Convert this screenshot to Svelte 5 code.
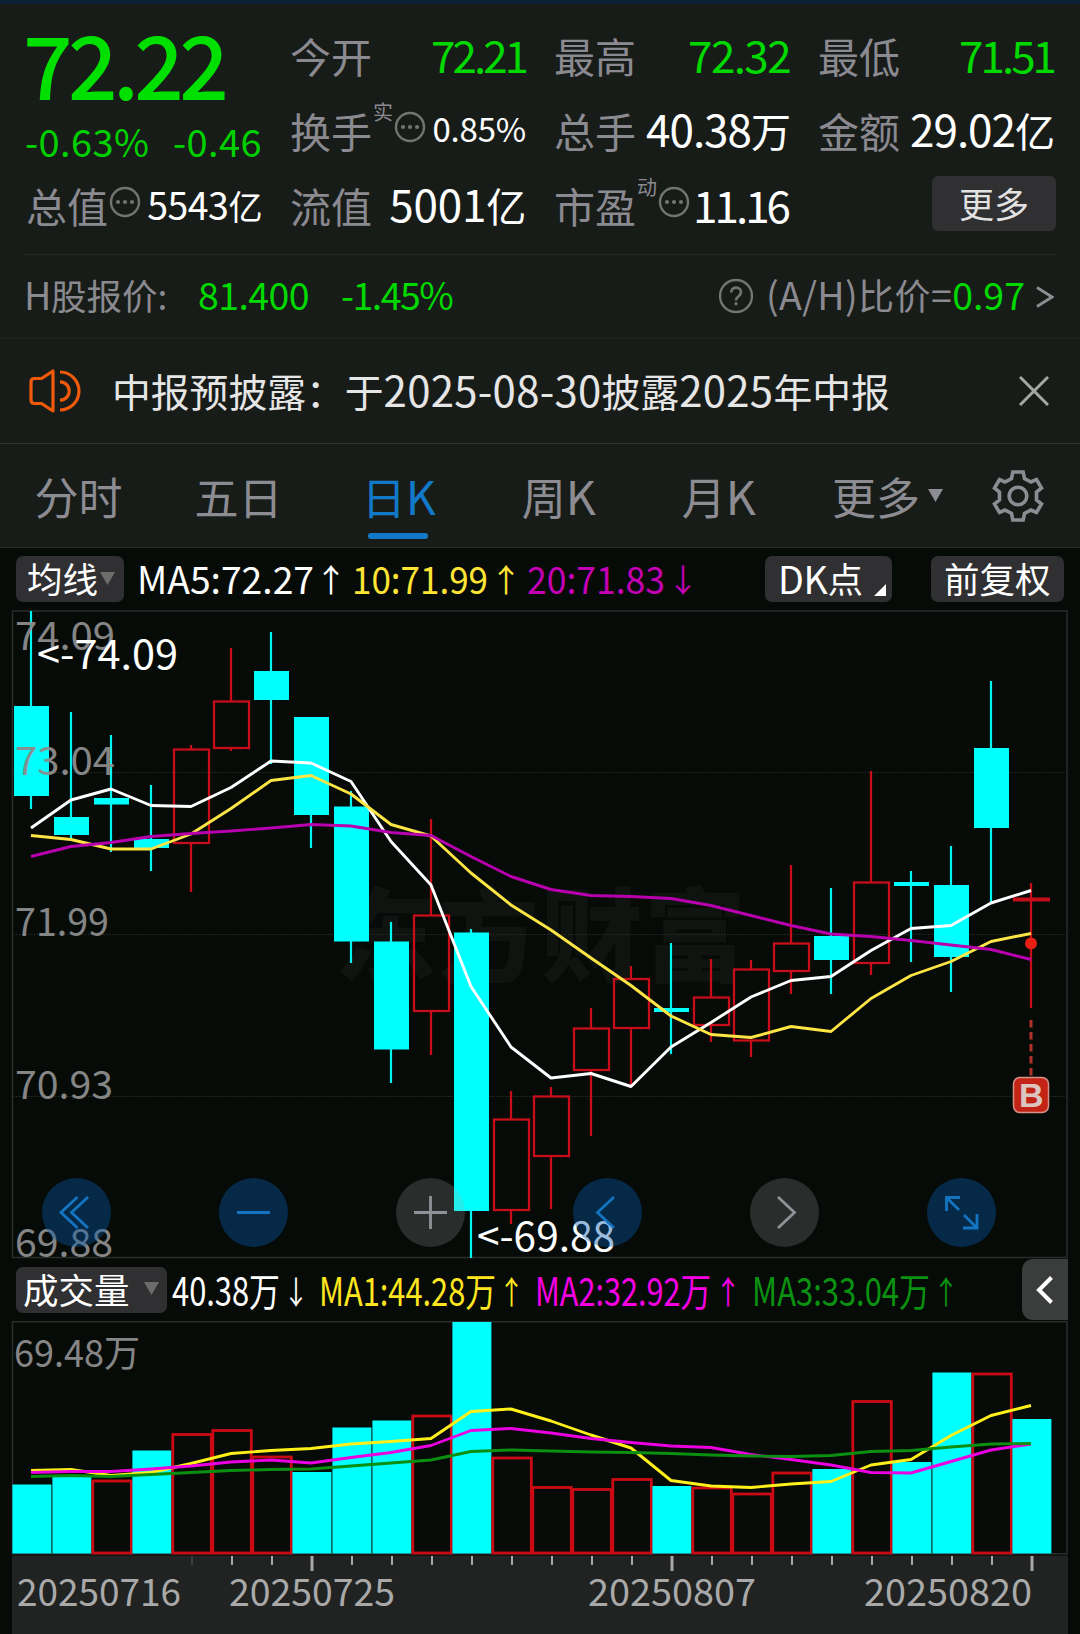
<script lang="ts">
	type Candle = { up: boolean; high: number; top: number; bottom: number; low: number };

	const STEP = 40;
	const cx = (i: number) => 31 + STEP * i;

	// u/d, high, top, bottom, low
	const candles: Candle[] = [
		['d', 611, 706, 796, 809],
		['d', 712, 817, 835, 838],
		['d', 735, 798, 804.5, 852],
		['d', 785, 839, 848, 871],
		['u', 745, 749, 843, 892],
		['u', 648, 701, 748, 751],
		['d', 632, 671, 700, 764],
		['d', 717, 717, 815, 848],
		['d', 791, 806.5, 941.5, 963],
		['d', 922, 941.5, 1049.5, 1083],
		['u', 819, 915, 1011, 1055],
		['d', 929, 932.5, 1211, 1258],
		['u', 1091, 1119, 1210, 1224],
		['u', 1087, 1096, 1156, 1209],
		['u', 1008, 1028, 1070, 1136],
		['u', 966, 978.5, 1028, 1086],
		['d', 943, 1008, 1012, 1054],
		['u', 959, 997, 1025, 1042],
		['u', 960, 969, 1040.5, 1057],
		['u', 865, 943, 971, 994],
		['d', 888, 936, 960, 994],
		['u', 771, 882, 963, 975],
		['d', 871, 882, 886, 962],
		['d', 846, 885, 957, 992],
		['d', 681, 748, 828, 903],
		['u', 883, 899.5, 899.5, 1008]
	].map(([k, high, top, bottom, low]) => ({ up: k === 'u', high, top, bottom, low }) as Candle);

	const ma5 = [828, 800, 789, 805.5, 806.5, 787.5, 761, 763, 781.5, 841.5, 885, 986.5, 1047, 1078, 1073.5, 1086.5, 1047, 1022.5, 997, 980.5, 976.5, 950.5, 928.5, 925.5, 903, 890.5];
	const ma10 = [835.5, 839.5, 849, 849, 834, 808.5, 780.5, 775.5, 794, 824.5, 836, 873, 905, 930, 958, 985.5, 1016, 1034.5, 1037.5, 1026.5, 1031.5, 998.5, 975.5, 961.5, 941.5, 933.5];
	const ma20 = [856.5, 846.5, 842.5, 836.5, 833.5, 831, 828, 824.5, 826, 832.5, 835.5, 856.5, 876.5, 889.5, 895.5, 896.5, 898.5, 905.5, 915.5, 925.5, 934, 936.5, 940.5, 945, 949.5, 959.5];

	const volumes = [1484.5, 1477, 1480, 1450.5, 1433.5, 1429.5, 1456, 1472, 1427.5, 1420.5, 1415, 1322, 1457, 1486.5, 1488.5, 1478.5, 1486, 1487, 1493, 1472, 1469, 1400.5, 1462, 1372.5, 1373, 1419];
	// volume bars drawn hollow (close above the previous close)
	const hollow = [2, 4, 5, 6, 10, 12, 13, 14, 15, 17, 18, 19, 21, 24];
	const vol1 = [1470.5, 1469.5, 1475.5, 1472.5, 1463.5, 1453.5, 1450.5, 1448.5, 1444, 1441.5, 1438.5, 1411.5, 1409, 1421, 1435, 1448, 1480.5, 1486, 1487.5, 1484, 1481.5, 1465, 1459.5, 1435.5, 1415.5, 1405.5];
	const vol2 = [1472.5, 1471.5, 1471.5, 1469, 1466, 1462, 1460, 1463, 1457.5, 1452.5, 1445.5, 1430.5, 1428.5, 1433, 1438.5, 1442.5, 1446, 1447.5, 1454.5, 1459.5, 1465, 1472.5, 1473, 1461.5, 1450, 1444];
	const vol3 = [1476.5, 1475.5, 1476.5, 1474.5, 1472.5, 1470.5, 1469.5, 1469, 1466, 1463, 1460, 1451.5, 1450, 1451, 1452, 1452.5, 1453.5, 1455, 1456, 1456.5, 1455.5, 1451.5, 1450.5, 1447, 1444, 1443.5];

	const line = (ys: number[]) => ys.map((y, i) => `${cx(i)},${y}`).join(' ');

	const gridLines = [772.5, 934.5, 1096.5];
	const priceLabels = [
		{ text: '74.09', y: 649.5, w: 100 },
		{ text: '73.04', y: 774.5, w: 100 },
		{ text: '71.99', y: 936, w: 94 },
		{ text: '70.93', y: 1098.5, w: 98 },
		{ text: '69.88', y: 1256.5, w: 98 }
	];
	const dates = [
		{ text: '20250716', x: 17, w: 164 },
		{ text: '20250725', x: 229, w: 166 },
		{ text: '20250807', x: 588, w: 168 },
		{ text: '20250820', x: 864, w: 168 }
	];

	const priceLegend = [
		{ text: 'MA5:72.27', x: 137, w: 177, arrow: '↑', ax: 331, color: '#fff' },
		{ text: '10:71.99', x: 352, w: 136, arrow: '↑', ax: 506, color: '#ffe436' },
		{ text: '20:71.83', x: 527, w: 138, arrow: '↓', ax: 683, color: '#c400b4' }
	];
	const volumeLegend = [
		{ text: '40.38万', x: 172, w: 108, arrow: '↓', ax: 296, color: '#fff' },
		{ text: 'MA1:44.28万', x: 319, w: 177, arrow: '↑', ax: 511.5, color: '#ffe61e' },
		{ text: 'MA2:32.92万', x: 535, w: 176, arrow: '↑', ax: 728, color: '#f800e4' },
		{ text: 'MA3:33.04万', x: 752, w: 178, arrow: '↑', ax: 946, color: '#0a9210' }
	];

	const tabs = ['分时', '五日', '日K', '周K', '月K'];
	let active = $state('日K');
	let showNotice = $state(true);

	const controls = [
		{ on: true, d: 'M35.5 19 19 34.5l16.5 15.5M46 19 29.5 34.5 46 50' },
		{ on: true, d: 'M18 34.5h33' },
		{ on: false, d: 'M18 34.5h33M34.5 18v33' },
		{ on: true, d: 'M41 19 24.5 34.5 41 50' },
		{ on: false, d: 'M28 19l16.5 15.5L28 50' },
		{ on: true, d: 'M19.500 33V19.500H33M19.500 19.500l12.500 12.500M50 36v14H36M50 50 37 37' }
	];
</script>

{#snippet mixed(text: string)}{#each text.split(/([\dA-Z.%-]+)/) as part, i}{#if i % 2}<span class="num">{part}</span>{:else}{part}{/if}{/each}{/snippet}

{#snippet dots()}
	<svg class="dots" viewBox="0 0 32 32">
		<circle cx="16" cy="16" r="14" fill="none" stroke="#74746f" stroke-width="2.4" />
		<circle cx="9" cy="16" r="2.1" /><circle cx="16" cy="16" r="2.1" /><circle cx="23" cy="16" r="2.1" />
	</svg>
{/snippet}

{#snippet legend(items: typeof priceLegend, y: number, size: number, arrowWidth: number)}
	{#each items as item}
		<text x={item.x} {y} font-size={size} fill={item.color} textLength={item.w} lengthAdjust="spacingAndGlyphs">{item.text}</text>
		<text class="dir" x={item.ax - arrowWidth / 2} y={y - 1.5} font-size="32" fill={item.color} textLength={arrowWidth} lengthAdjust="spacingAndGlyphs">{item.arrow}</text>
	{/each}
{/snippet}

<div class="page">
	<section class="quote">
		<div class="price">
			<b>72.22</b>
			<div class="change"><span>-0.63%</span><span>-0.46</span></div>
		</div>
		<div class="cell"><label>今开</label><span class="val green tight">72.21</span></div>
		<div class="cell"><label>最高</label><span class="val green">72.32</span></div>
		<div class="cell"><label>最低</label><span class="val green tight">71.51</span></div>
		<div class="cell"><label>换手</label><sup>实</sup>{@render dots()}<span class="val xs">0.85%</span></div>
		<div class="cell"><label>总手</label><span class="val">40.38<i>万</i></span></div>
		<div class="cell"><label>金额</label><span class="val">29.02<i>亿</i></span></div>
		<div class="cell"><label>总值</label>{@render dots()}<span class="val sm">5543<i>亿</i></span></div>
		<div class="cell"><label>流值</label><span class="val wide">5001<i>亿</i></span></div>
		<div class="cell"><label>市盈</label><sup>动</sup>{@render dots()}<span class="val pe">11.16</span></div>
		<div class="cell"><button class="more">更多</button></div>
	</section>

	<section class="hshare">
		<span class="name">{@render mixed('H股报价:')}</span>
		<span class="green hprice">81.400</span>
		<span class="green hchange">-1.45%</span>
		<svg class="help" viewBox="0 0 36 36" fill="none" stroke="#74746f" stroke-width="2.4">
			<circle cx="18" cy="18" r="16" />
			<path d="M13.2 14.6c0-3 2-5 4.9-5s4.9 1.8 4.9 4.5c0 2.2-1.2 3.1-2.7 4.4-1.5 1.2-2.3 2-2.3 4" stroke-width="2.600" />
			<circle cx="18" cy="25.8" r="1.2" fill="#74746f" stroke-width="1" />
		</svg>
		<span class="ratio">(A/H)<em>比价</em>=</span>
		<span class="green hratio">0.97</span>
		<svg class="arrow" viewBox="0 0 18 22"><path d="M1 1.5 16 11 1 20.5" fill="none" stroke="#8c8c92" stroke-width="2.8" /></svg>
	</section>

	{#if showNotice}
		<section class="notice">
			<svg class="horn" viewBox="0 0 52 46" fill="none" stroke="#f05a0a" stroke-width="3.2" stroke-linejoin="round">
				<path d="M24 3v40l-11.500-7.500H5.500q-3.500 0-3.500-3.500V14q0-3.500 3.500-3.500h7z" />
				<path d="M31 4a19 19 0 0 1 0 38M31 13.800a9.200 9.200 0 0 1 0 18.400" />
			</svg>
			<p>{@render mixed('中报预披露：于2025-08-30披露2025年中报')}</p>
			<button class="close" aria-label="关闭" onclick={() => (showNotice = false)}>
				<svg viewBox="0 0 30 30"><path d="M1 1 29 29M29 1 1 29" stroke="#a6a6a4" stroke-width="3" /></svg>
			</button>
		</section>
	{/if}

	<nav>
		{#each tabs as tab}
			<button class="tab" class:active={active === tab} onclick={() => (active = tab)}>{@render mixed(tab)}</button>
		{/each}
		<button class="tab dropdown">更多<svg class="caret" viewBox="0 0 15 13"><path d="M0 0h15L7.500 13z" fill="#8c8c92" /></svg></button>
		<svg class="gear" viewBox="0 0 52 54" fill="none" stroke="#8c8c92" stroke-width="3.600">
			<path d="M20.800 3h10.400l1.300 6.500 6.500 3.500 5.500-2.500 5 8.500-5 4v8l5 4-5 8.500-5.500-2.500-6.500 3.500-1.300 6.500H20.800l-1.300-6.500L13 41l-5.500 2.500-5-8.500 5-4v-8l-5-4 5-8.500L13 13l6.500-3.500z" />
			<circle cx="26" cy="27" r="8.800" />
		</svg>
	</nav>

	<div class="chart">
		<div class="bar top">
			<svg class="legend" viewBox="0 548 1080 62">{@render legend(priceLegend, 593.5, 37.5, 32)}</svg>
			<button class="pill avg">均线<svg class="caret" viewBox="0 0 15 13"><path d="M0 0h15L7.500 13z" fill="#6b6d6b" /></svg></button>
			<button class="pill dk">{@render mixed('DK点')}<svg class="corner" viewBox="0 0 12 12"><path d="M12 0v12H0z" fill="#fff" /></svg></button>
			<button class="pill adj">前复权</button>
		</div>

		<div class="candles">
			<svg viewBox="0 610 1080 648">
				<text x="334" y="974" font-size="102" font-weight="900" fill="#0f1411" textLength="412">东方财富</text>
				<rect x="12.500" y="611" width="1054.500" height="646.500" fill="none" stroke="#2a2d2b" stroke-width="1.500" />
				{#each gridLines as y}
					<line x1="13" x2="1067" y1={y} y2={y} stroke="#282c2a" stroke-width="1.200" stroke-dasharray="1.500 1.500" />
				{/each}
				{#each candles as c, i}
					{#if c.up}
						<g stroke="#c60d1a" stroke-width="2.300" fill="none">
							<line x1={cx(i)} x2={cx(i)} y1={c.high} y2={c.top} />
							<line x1={cx(i)} x2={cx(i)} y1={c.bottom} y2={c.low} />
							{#if c.top === c.bottom}
								<line x1={cx(i) - 18} x2={cx(i) + 19} y1={c.top} y2={c.top} stroke-width="4" />
							{:else}
								<rect x={cx(i) - 17} y={c.top + 0.5} width="35" height={c.bottom - c.top - 0.5} />
							{/if}
						</g>
					{:else}
						<line x1={cx(i)} x2={cx(i)} y1={c.high} y2={c.low} stroke="#00f4f4" stroke-width="2.200" />
						<rect x={cx(i) - 17} y={c.top} width="35" height={c.bottom - c.top} fill="#0ff" />
					{/if}
				{/each}
				<g fill="none" stroke-width="2.900" stroke-linejoin="round">
					<polyline points={line(ma5)} stroke="#fff" />
					<polyline points={line(ma10)} stroke="#fce544" />
					<polyline points={line(ma20)} stroke="#b800ae" />
				</g>
				{#each priceLabels as l}
					<text x="15" y={l.y} font-size="39" fill="#8c8c8c" opacity="0.950" textLength={l.w} lengthAdjust="spacingAndGlyphs">{l.text}</text>
				{/each}
				<text x="37" y="668.500" font-size="40" fill="#fff" textLength="141" lengthAdjust="spacingAndGlyphs">&lt;-74.09</text>
				<text x="477" y="1251" font-size="40" fill="#fff" textLength="138" lengthAdjust="spacingAndGlyphs">&lt;-69.88</text>
				<circle cx="1031" cy="943.500" r="6" fill="#e82014" />
				<line x1="1031" x2="1031" y1="1020" y2="1077" stroke="#b3302a" stroke-width="3" stroke-dasharray="7.500 4.500" />
				<rect x="1013.500" y="1077.500" width="35" height="35" rx="6.500" fill="#c42416" stroke="#d69087" stroke-width="1.500" />
				<text class="badge" x="1031.200" y="1107" font-size="34" text-anchor="middle">B</text>
			</svg>
			<div class="controls">
				{#each controls as c}
					<button class:on={c.on} aria-label="图表控制"><svg viewBox="0 0 69 69"><path d={c.d} /></svg></button>
				{/each}
			</div>
		</div>

		<div class="bar mid">
			<svg class="legend" viewBox="0 1258 1080 63">{@render legend(volumeLegend, 1305.5, 39, 26)}</svg>
			<button class="pill vol">成交量<svg class="caret" viewBox="0 0 15 13"><path d="M0 0h15L7.500 13z" fill="#6b6d6b" /></svg></button>
			<button class="fold" aria-label="展开"><svg viewBox="0 0 18 30"><path d="M15.500 2.500 3 15l12.500 12.500" fill="none" stroke="#fff" stroke-width="4" /></svg></button>
		</div>

		<svg class="volume" viewBox="0 1321 1080 234">
			<rect x="12.500" y="1321.700" width="1054.500" height="232" fill="none" stroke="#2a2d2b" stroke-width="1.500" />
			{#each volumes as y, i}
				{#if hollow.includes(i)}
					<rect x={cx(i) - 18.2} y={y + 1} width="38.500" height={1552 - y} fill="none" stroke="#cb0a14" stroke-width="2.800" />
				{:else}
					<rect x={cx(i) - 18.6} {y} width="39" height={1553.5 - y} fill="#0ff" />
				{/if}
			{/each}
			<g fill="none" stroke-width="2.900" stroke-linejoin="round">
				<polyline points={line(vol1)} stroke="#fff01a" />
				<polyline points={line(vol2)} stroke="#ea00e0" />
				<polyline points={line(vol3)} stroke="#0a8f10" />
			</g>
			<text x="14" y="1366.500" font-size="37" fill="#868686" textLength="126" lengthAdjust="spacingAndGlyphs">69.48万</text>
		</svg>

		<svg class="axis" viewBox="0 1555 1080 79">
			<rect x="12" y="1555.500" width="1056" height="79" fill="#202321" />
			{#each candles as _, i}
				{#if i > 3}
					<line
						x1={cx(i) + 1}
						x2={cx(i) + 1}
						y1="1556"
						y2={i % 9 === 7 ? 1571 : 1565}
						stroke={i === 4 ? '#3a3d3b' : '#a8a8a6'}
						stroke-width={i % 9 === 7 ? 3 : 2}
					/>
				{/if}
			{/each}
			{#each dates as d}
				<text x={d.x} y="1605.500" font-size="37.500" fill="#a9a9a9" textLength={d.w} lengthAdjust="spacingAndGlyphs">{d.text}</text>
			{/each}
		</svg>
	</div>
</div>

<style>
	:global(body) {
		margin: 0;
		background: #060b08;
	}
	.page {
		width: 1080px;
		height: 1634px;
		overflow: hidden;
		box-sizing: border-box;
		border-top: 4px solid #0b2036;
		background: #181c19;
		color: #fff;
		font-family: "Noto Sans CJK SC", sans-serif;
		line-height: 1;
		white-space: nowrap;
	}
	svg {
		display: block;
		flex: none;
	}
	button {
		border: none;
		padding: 0;
		background: none;
		color: inherit;
		font: inherit;
		line-height: 1;
		display: flex;
		align-items: center;
		cursor: pointer;
	}
	.green {
		color: #00d800;
	}
	.num {
		font-size: 1.06em;
		letter-spacing: -0.01em;
	}

	/* quote header */
	.quote {
		display: grid;
		grid-template-columns: repeat(4, 236px);
		grid-template-rows: repeat(3, 75px);
		column-gap: 28px;
		margin: 0 24px;
		padding: 12px 2px 13px;
		border-bottom: 1px solid #292526;
	}
	.price {
		grid-row: span 2;
		color: #00e000;
	}
	.price b {
		display: block;
		margin-top: 3px;
		margin-left: -3px;
		font-size: 87px;
		font-weight: 500;
		letter-spacing: -4.6px;
	}
	.change {
		display: flex;
		justify-content: space-between;
		margin-top: 16px;
		margin-left: -1px;
		font-size: 38px;
		color: #00d000;
		letter-spacing: 0.4px;
	}
	.cell {
		display: flex;
		align-items: center;
	}
	label {
		margin-top: 3px;
		font-size: 41px;
		color: #8a8a90;
	}
	sup {
		align-self: flex-start;
		margin-top: 11px;
		margin-left: 1px;
		font-size: 20px;
		line-height: 1;
		color: #8a8a90;
	}
	.dots {
		width: 32px;
		height: 32px;
		margin: -3px 0 0 1px;
		fill: #74746f;
	}
	.val {
		margin-left: auto;
		font-size: 44px;
		letter-spacing: -1px;
	}
	.val.green {
		letter-spacing: -1.6px;
	}
	.val.tight {
		letter-spacing: -3px;
	}
	.val i {
		font-style: normal;
		font-size: 0.91em;
	}
	.val.wide {
		letter-spacing: -0.2px;
	}
	.val.sm {
		font-size: 37.5px;
		letter-spacing: -0.5px;
	}
	.val.xs {
		font-size: 33px;
		letter-spacing: -0.2px;
	}
	.val.pe {
		margin-right: 2px;
		letter-spacing: -3px;
	}
	.more {
		margin-left: auto;
		margin-right: -2px;
		width: 124px;
		height: 55px;
		justify-content: center;
		padding-bottom: 3px;
		box-sizing: border-box;
		border-radius: 6px;
		background: #302f31;
		color: #e2e2e2;
		font-size: 35px;
	}

	.hshare {
		display: flex;
		align-items: center;
		height: 82px;
		padding: 0 26px 1px;
		border-bottom: 1px solid #212522;
		font-size: 37.5px;
	}
	.hshare span {
		margin-top: -4px;
	}
	.name {
		color: #8a8a90;
		font-size: 35.500px;
		width: 172px;
		margin-left: -2px;
		margin-right: 2px;
	}
	.hprice {
		width: 143px;
		letter-spacing: -0.6px;
	}
	.hchange {
		letter-spacing: -1.500px;
	}
	.help {
		width: 36px;
		height: 36px;
		margin-left: auto;
		margin-right: 12px;
	}
	.ratio {
		color: #8a8a90;
		font-size: 37.500px;
		letter-spacing: 0.400px;
	}
	.ratio em {
		font-style: normal;
		font-size: 36px;
	}
	.hratio {
		margin-right: 11px;
	}
	.arrow {
		width: 18px;
		height: 22px;
		margin-top: 2px;
	}

	.notice {
		display: flex;
		align-items: center;
		height: 104px;
		padding: 0 31px 0 29px;
		border-bottom: 1px solid #303431;
	}
	.horn {
		width: 52px;
		height: 46px;
	}
	.notice p {
		margin: 0 auto 4px 31px;
		font-size: 38.800px;
		color: #e6e6e6;
	}
	.notice .num {
		font-size: 1.08em;
		letter-spacing: 0.007em;
	}
	.close svg {
		width: 30px;
		height: 30px;
	}

	nav {
		display: flex;
		align-items: center;
		height: 103px;
		border-bottom: 1px solid #2c302d;
		font-size: 44px;
		color: #8c8c92;
	}
	.tab {
		position: relative;
		justify-content: center;
		width: 160px;
		height: 100%;
		padding-right: 3px;
		box-sizing: border-box;
	}
	.tab.active {
		color: #1278c8;
	}
	.tab.active::after {
		content: "";
		position: absolute;
		left: 48px;
		bottom: 8px;
		width: 60px;
		height: 6px;
		border-radius: 3px;
		background: #1278c8;
	}
	.tab.dropdown {
		width: 193px;
		justify-content: flex-start;
		padding-left: 32px;
	}
	.tab .caret {
		margin-left: 8px;
	}
	.caret {
		width: 15px;
		height: 13px;
	}
	.gear {
		width: 52px;
		height: 54px;
		margin-left: -1px;
	}

	/* chart area */
	.chart {
		background: #060b08;
	}
	.bar {
		position: relative;
		display: flex;
		align-items: center;
		box-sizing: border-box;
	}
	.bar.top {
		height: 62px;
		padding: 0 16px;
	}
	.bar.mid {
		height: 63px;
		padding: 0 12px 0 16px;
	}
	.legend {
		position: absolute;
		inset: 0;
		width: 1080px;
	}
	.dir {
		stroke: currentColor;
		stroke-width: 0;
	}
	.pill {
		position: relative;
		height: 46px;
		box-sizing: border-box;
		padding: 0 11px 2px;
		border-radius: 7px;
		background: #303032;
		font-size: 35.500px;
	}
	.avg {
		width: 108px;
	}
	.avg .caret {
		margin-left: 2px;
	}
	.dk {
		width: 127px;
		margin-left: auto;
		padding-left: 13px;
	}
	.corner {
		position: absolute;
		right: 6px;
		bottom: 6px;
		width: 12px;
		height: 12px;
	}
	.adj {
		width: 133px;
		margin-left: 39px;
		padding-left: 13px;
	}
	.vol {
		width: 151px;
		padding-left: 7px;
	}
	.vol .caret {
		margin-left: 14px;
	}
	.fold {
		width: 46px;
		height: 61px;
		margin-left: auto;
		justify-content: center;
		border-radius: 11px 0 0 11px;
		background: #3a3d3b;
	}
	.fold svg {
		width: 18px;
		height: 30px;
	}
	.candles {
		position: relative;
	}
	.candles > svg {
		overflow: visible;
	}
	.controls {
		position: absolute;
		left: 42px;
		bottom: 11px;
		display: flex;
		gap: 108px;
	}
	.controls button {
		width: 69px;
		height: 69px;
		border-radius: 50%;
		background: rgba(170, 170, 170, 0.22);
	}
	.controls button.on {
		background: rgba(4, 88, 168, 0.4);
	}
	.controls path {
		fill: none;
		stroke: #909298;
		stroke-width: 2.800;
	}
	.controls .on path {
		stroke: #1375c2;
	}
	.badge {
		font-family: "Liberation Sans", sans-serif;
		font-weight: 700;
		fill: #dcc4c0;
	}
</style>
